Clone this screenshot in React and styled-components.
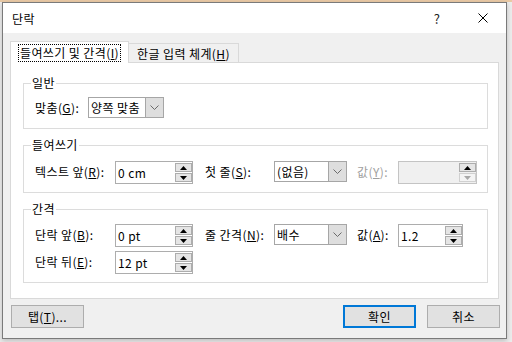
import React from 'react';
import styled, { createGlobalStyle } from 'styled-components';

const Global = createGlobalStyle`
  html, body { margin: 0; padding: 0; }
  body {
    width: 512px; height: 342px; overflow: hidden;
    background: #e4e4e4;
    font-family: "Noto Sans CJK KR", "Noto Sans", sans-serif;
    font-size: 12px; letter-spacing: 0.4px; color: #000;
  }
  * { box-sizing: border-box; }
`;

const Desktop = styled.div`
  width: 512px; height: 342px;
  padding: 2px 0 0 2px;
  background: linear-gradient(to bottom, #e9c9a5 0, #e9c9a5 2px, #ececec 2px);
`;

const Window = styled.div`
  width: 505px; height: 337px;
  border: 1px solid #7a7a7a;
  background: #f0f0f0;
  display: flex; flex-direction: column;
  box-shadow: 0 2px 5px rgba(0,0,0,0.2);
`;

const TitleBar = styled.div`
  height: 30px; flex: none;
  background: #fff;
  display: flex; align-items: center;
`;

const Title = styled.div`
  flex: 1; padding-left: 9px; font-size: 12px;
`;

const CaptionButton = styled.div`
  width: 46px; height: 30px;
  display: flex; align-items: center; justify-content: center;
  font-size: 13px; color: #222;
`;

const Body = styled.div`
  flex: 1;
  display: flex; flex-direction: column;
  padding: 8px 6px 0 7px;
`;

const TabStrip = styled.div`
  height: 21px; display: flex; align-items: flex-end;
  position: relative; z-index: 1;
`;

const Tab = styled.div`
  width: ${p => p.$w}px;
  height: ${p => (p.$active ? 22 : 19)}px;
  margin-bottom: ${p => (p.$active ? -1 : 0)}px;
  margin-left: ${p => (p.$active ? 0 : -1)}px;
  background: ${p => (p.$active ? '#fff' : '#f0f0f0')};
  border: 1px solid #d9d9d9;
  border-bottom: none;
  display: flex; align-items: center; justify-content: center;
  white-space: nowrap;
  position: relative; z-index: ${p => (p.$active ? 2 : 1)};
`;

const FocusRect = styled.span`
  border: 1px dotted #000;
  padding: 0 1px;
  line-height: 16px;
`;

const Panel = styled.div`
  width: 489px; height: 237px;
  border: 1px solid #d9d9d9;
  background: #fff;
  padding: 12px 10px 0 12px;
  display: flex; flex-direction: column; gap: 8px;
`;

const Group = styled.fieldset`
  margin: 0; min-width: 0;
  border: 1px solid #dcdcdc;
  padding: ${p => p.$pt}px 11px 8px 11px;
`;

const Legend = styled.legend`
  padding: 0 1px; margin-left: -4px;
  line-height: 16px; font-size: 12px;
`;

const FlexRow = styled.div`
  display: flex; align-items: flex-start; height: 23px;
`;

const Grid = styled.div`
  display: grid;
  grid-template-columns: 80px 90px 69px 83px 41px auto;
  grid-auto-rows: 23px;
  row-gap: 4px;
  align-items: start;
`;

const Label = styled.div`
  width: ${p => (p.$w ? `${p.$w}px` : 'auto')};
  line-height: ${p => p.$lh || 22}px;
  white-space: nowrap;
  color: ${p => (p.$disabled ? '#a0a0a0' : '#000')};
`;

const SpinBox = styled.div`
  width: ${p => p.$w}px; height: 23px;
  border: 1px solid ${p => (p.$disabled ? '#c4c4c4' : '#adadad')};
  background: ${p => (p.$disabled ? '#f0f0f0' : '#fff')};
  display: flex;
`;

const SpinValue = styled.div`
  flex: 1; padding-left: 2px; line-height: 21px; white-space: nowrap;
`;

const SpinButtons = styled.div`
  width: 17px; display: flex; flex-direction: column; gap: 1px;
  padding: 1px 0 1px 0;
`;

const SpinButton = styled.div`
  flex: 1;
  border: 1px solid ${p => (p.$disabled ? '#d0d0d0' : '#adadad')};
  background: ${p => (p.$disabled ? '#f4f4f4' : '#e5e5e5')};
  display: flex; align-items: center; justify-content: center;
`;

const Select = styled.div`
  width: ${p => p.$w}px; height: 21px;
  border: 1px solid #a6a6a6;
  background: #fff;
  display: flex;
`;

const SelectText = styled.div`
  flex: 1; padding-left: 2px; line-height: 19px; white-space: nowrap;
`;

const DropButton = styled.div`
  width: 18px;
  border-left: 1px solid #a6a6a6;
  background: #dedede;
  display: flex; align-items: center; justify-content: center;
`;

const Footer = styled.div`
  display: flex; justify-content: space-between;
  margin-top: 6px; padding-left: 1px;
`;

const ButtonGroup = styled.div`
  display: flex; gap: 11px;
`;

const Button = styled.div`
  width: 73px; height: 23px;
  border: ${p => (p.$default ? '2px solid #0078d7' : '1px solid #adadad')};
  background: #e1e1e1;
  display: flex; align-items: center; justify-content: center;
  white-space: nowrap;
`;

const Arrow = ({ down, color = '#000' }) => (
  <svg width="7" height="4" viewBox="0 0 7 4">
    {down ? <polygon points="0,0 7,0 3.5,4" fill={color} /> : <polygon points="0,4 7,4 3.5,0" fill={color} />}
  </svg>
);

const Chevron = () => (
  <svg width="9" height="5" viewBox="0 0 9 5">
    <polyline points="0.5,0.5 4.5,4.5 8.5,0.5" fill="none" stroke="#6b6b6b" strokeWidth="1" />
  </svg>
);

const Spin = ({ w, value, disabled }) => (
  <SpinBox $w={w} $disabled={disabled}>
    <SpinValue>{value}</SpinValue>
    <SpinButtons>
      <SpinButton><Arrow /></SpinButton>
      <SpinButton $disabled={disabled}><Arrow down color={disabled ? '#a8a8a8' : '#000'} /></SpinButton>
    </SpinButtons>
  </SpinBox>
);

const Combo = ({ w, value }) => (
  <Select $w={w}>
    <SelectText>{value}</SelectText>
    <DropButton><Chevron /></DropButton>
  </Select>
);

export default function App() {
  return (
    <>
      <Global />
      <Desktop>
        <Window>
          <TitleBar>
            <Title>단락</Title>
            <CaptionButton>?</CaptionButton>
            <CaptionButton>
              <svg width="10" height="10" viewBox="0 0 10 10">
                <path d="M0.5 0.5 L9.5 9.5 M9.5 0.5 L0.5 9.5" stroke="#000" strokeWidth="1" />
              </svg>
            </CaptionButton>
          </TitleBar>
          <Body>
            <TabStrip>
              <Tab $active $w={119}><FocusRect>들여쓰기 및 간격(<u>I</u>)</FocusRect></Tab>
              <Tab $w={111}>한글 입력 체계(<u>H</u>)</Tab>
            </TabStrip>
            <Panel>
              <Group $pt={6}>
                <Legend>일반</Legend>
                <FlexRow>
                  <Label $w={53} $lh={21}>맞춤(<u>G</u>):</Label>
                  <Combo w={76} value="양쪽 맞춤" />
                </FlexRow>
              </Group>
              <Group $pt={8}>
                <Legend>들여쓰기</Legend>
                <Grid>
                  <Label>텍스트 앞(<u>R</u>):</Label>
                  <Spin w={78} value="0 cm" />
                  <Label>첫 줄(<u>S</u>):</Label>
                  <Combo w={73} value="(없음)" />
                  <Label $disabled>값(<u>Y</u>):</Label>
                  <Spin w={79} value="" disabled />
                </Grid>
              </Group>
              <Group $pt={7}>
                <Legend>간격</Legend>
                <Grid>
                  <Label>단락 앞(<u>B</u>):</Label>
                  <Spin w={78} value="0 pt" />
                  <Label>줄 간격(<u>N</u>):</Label>
                  <Combo w={73} value="배수" />
                  <Label>값(<u>A</u>):</Label>
                  <Spin w={65} value="1.2" />
                  <Label>단락 뒤(<u>E</u>):</Label>
                  <Spin w={78} value="12 pt" />
                </Grid>
              </Group>
            </Panel>
            <Footer>
              <Button>탭(<u>T</u>)...</Button>
              <ButtonGroup>
                <Button $default>확인</Button>
                <Button>취소</Button>
              </ButtonGroup>
            </Footer>
          </Body>
        </Window>
      </Desktop>
    </>
  );
}
